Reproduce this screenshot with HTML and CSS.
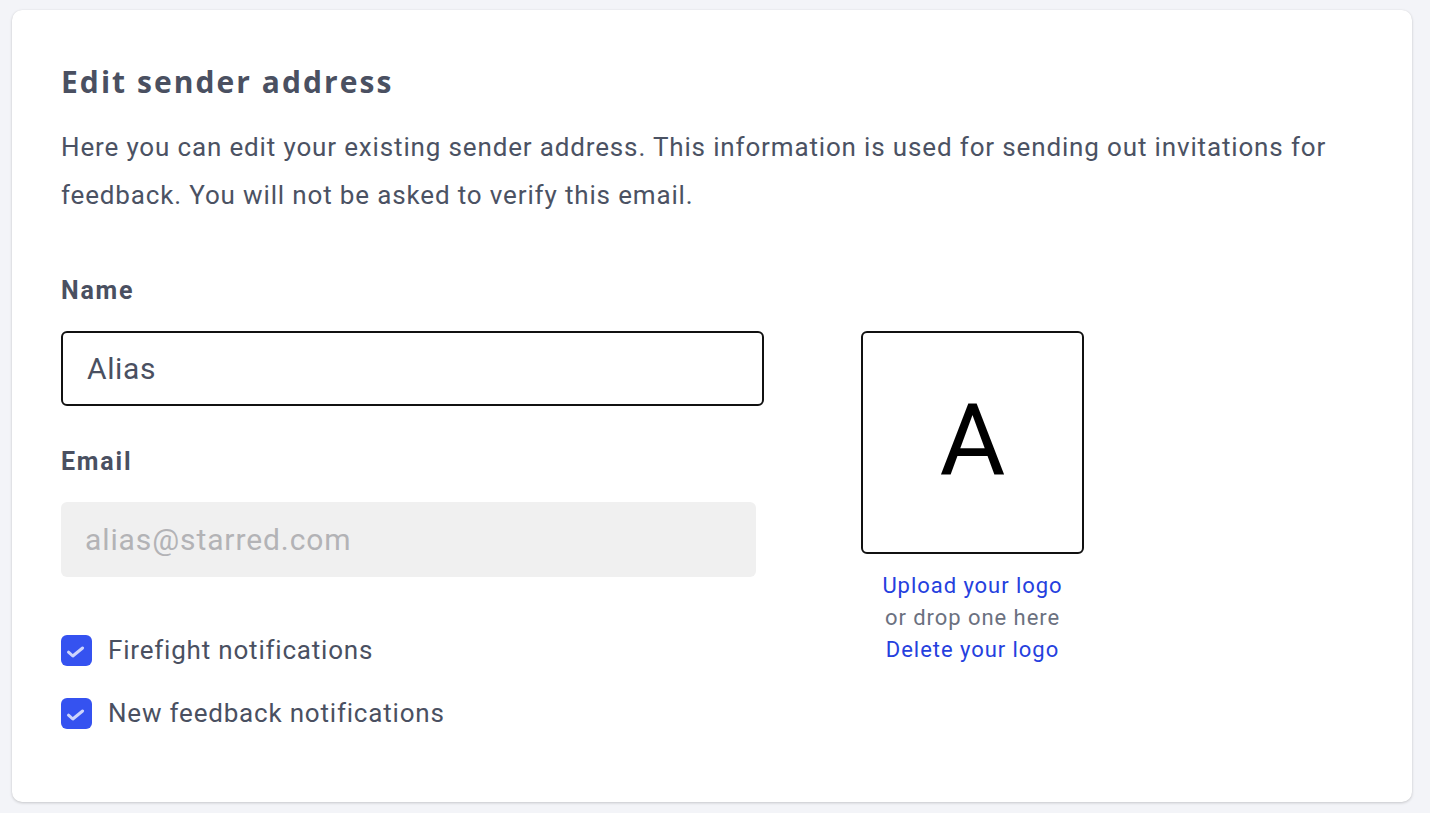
FILE: index.html
```html
<!DOCTYPE html>
<html>
<head>
<meta charset="utf-8">
<link rel="stylesheet" href="styles.css">
</head>
<body>
<div class="card">
  <h1 class="title">Edit sender address</h1>
  <p class="desc">Here you can edit your existing sender address. This information is used for sending out invitations for feedback. You will not be asked to verify this email.</p>
  <div class="form">
    <div class="fields">
      <label class="label">Name</label>
      <div class="input">Alias</div>
      <label class="label label-email">Email</label>
      <div class="input input-disabled">alias@starred.com</div>
      <div class="checks">
        <div class="check">
          <span class="box"><svg width="31" height="31" viewBox="0 0 31 31"><path d="M7.5 17.2l4.3 3.8 9.8-8" fill="none" stroke="#cdd4fc" stroke-width="3" stroke-linecap="round" stroke-linejoin="round"/></svg></span>
          <span class="check-text">Firefight notifications</span>
        </div>
        <div class="check">
          <span class="box"><svg width="31" height="31" viewBox="0 0 31 31"><path d="M7.5 17.2l4.3 3.8 9.8-8" fill="none" stroke="#cdd4fc" stroke-width="3" stroke-linecap="round" stroke-linejoin="round"/></svg></span>
          <span class="check-text">New feedback notifications</span>
        </div>
      </div>
    </div>
    <div class="logo">
      <div class="logo-box">A</div>
      <div class="logo-links">
        <a class="link">Upload your logo</a>
        <span class="muted">or drop one here</span>
        <a class="link">Delete your logo</a>
      </div>
    </div>
  </div>
</div>
</body>
</html>
```
FILE: styles.css
```css
* { box-sizing: border-box; }
html, body { margin: 0; padding: 0; }
body {
  background: #f3f4f8;
  font-family: Roboto, "Liberation Sans", sans-serif;
  padding: 10px 18px 0 12px;
  height: 813px;
}
.card {
  background: #fff;
  border-radius: 10px;
  box-shadow: 0 1px 3px rgba(0,0,0,0.18), 0 0 1px rgba(0,0,0,0.08);
  height: 792px;
  padding: 52px 49px 0 49px;
}
.title {
  margin: 0;
  font-family: "Open Sans", sans-serif;
  font-weight: 700;
  font-size: 30px;
  line-height: 40px;
  color: #4a5061;
  letter-spacing: 2.05px;
}
.desc {
  margin: 21px 0 0 0;
  font-size: 26px;
  line-height: 48px;
  color: #4b5263;
  letter-spacing: 0.85px;
  max-width: 1300px;
}
.form {
  display: flex;
  margin-top: 56px;
}
.fields {
  width: 703px;
  display: flex;
  flex-direction: column;
}
.label {
  font-weight: 700;
  font-size: 25px;
  line-height: 32px;
  letter-spacing: 1.8px;
  color: #4a5061;
}
.input {
  margin-top: 24px;
  height: 75px;
  border: 2px solid #111;
  border-radius: 6px;
  padding: 0 24px;
  display: flex;
  align-items: center;
  font-size: 30px;
  letter-spacing: 0.6px;
  color: #4a5061;
}
.label-email { margin-top: 40px; }
.input-disabled {
  width: 695px;
  border: none;
  background: #f0f0f0;
  color: #b3b3b6;
  letter-spacing: 0.9px;
  padding: 0 24px;
}
.checks {
  margin-top: 58px;
  display: flex;
  flex-direction: column;
  gap: 32px;
}
.check {
  display: flex;
  align-items: center;
  gap: 16px;
}
.box {
  width: 31px;
  height: 31px;
  border-radius: 6px;
  background: #3552f0;
  display: flex;
  align-items: center;
  justify-content: center;
}
.check-text {
  font-size: 26px;
  color: #4a5061;
  line-height: 31px;
  letter-spacing: 0.8px;
}
.logo {
  margin-left: 97px;
  margin-top: 56px;
  width: 223px;
  display: flex;
  flex-direction: column;
  align-items: center;
}
.logo-box {
  width: 223px;
  height: 223px;
  border: 2px solid #111;
  border-radius: 6px;
  display: flex;
  align-items: center;
  justify-content: center;
  font-size: 101px;
  color: #000;
  padding-bottom: 4px;
}
.logo-links {
  margin-top: 16px;
  display: flex;
  flex-direction: column;
  align-items: center;
  font-size: 22px;
  line-height: 32px;
  letter-spacing: 0.95px;
}
.link { color: #2540de; }
.muted { color: #6b7180; }
```
